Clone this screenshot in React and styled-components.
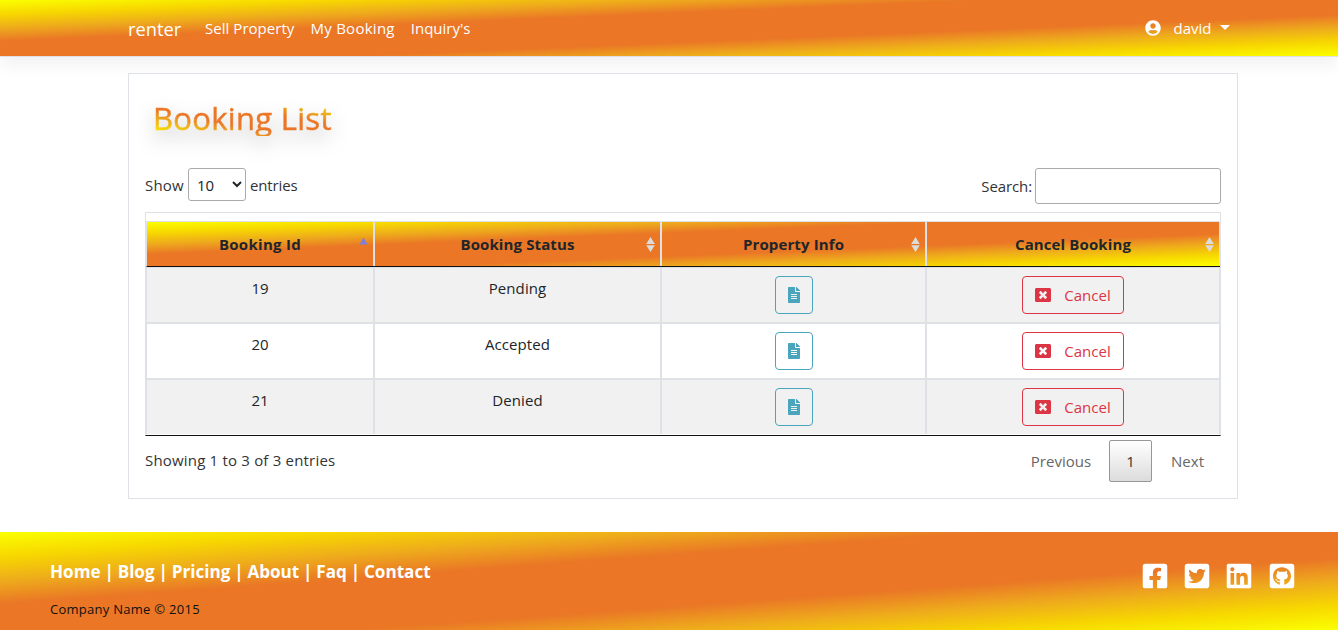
import React from 'react';
import styled, { createGlobalStyle, css } from 'styled-components';
import {
  FaUserCircle, FaFacebookSquare, FaTwitterSquare, FaLinkedin, FaGithubSquare, FaFileAlt, FaWindowClose,
} from 'react-icons/fa';

const stops = '#fbff00 0%, #f7d800 12.5%, #eeab1c 25%, #ea7626 37%, #ea7626 63%, #eeab1c 75%, #f7d800 87.5%, #fbff00 100%';
const sunset = `linear-gradient(to bottom right, ${stops})`;

const Global = createGlobalStyle`
  *, *::before, *::after { box-sizing: border-box; }
  html, body { margin: 0; overflow: hidden; }
  body {
    background: #fff;
    color: #212529;
    font-family: "Open Sans", "Noto Sans", sans-serif;
    font-size: 15px;
    line-height: 24px;
    font-weight: 400;
  }
`;

const Page = styled.div`
  height: 630px;
  display: flex;
  flex-direction: column;
`;

const Text = styled.span`
  display: inline-block;
  white-space: nowrap;
  letter-spacing: ${(p) => p.$ls || 0}px;
`;

const Navbar = styled.nav`
  height: 57px;
  flex: none;
  padding: 0 108px 0 128px;
  display: flex;
  align-items: center;
  background: ${sunset} padding-box;
  border-bottom: 1px solid #dee2e6;
  box-shadow: 0 8px 16px rgba(0, 0, 0, 0.06);
  color: #fff;
`;

const Brand = styled.a`
  font-size: 18.3px;
  width: 77px;
  padding-top: 2px;
`;

const NavLinks = styled.div`
  display: flex;
  gap: 16px;
  flex: 1;
`;

const UserMenu = styled.div`
  display: flex;
  align-items: center;
  svg { width: 16px; height: 16px; margin-right: 13px; }
`;

const Caret = styled.i`
  border-top: 5px solid #fff;
  border-left: 5px solid transparent;
  border-right: 5px solid transparent;
  margin: -2px 0 0 8.5px;
`;

const Card = styled.main`
  width: 1110px;
  height: 426px;
  flex: none;
  margin: 16px 0 33px 128px;
  border: 1px solid #dee2e6;
  padding: 24px 16px 0;
  display: flex;
  flex-direction: column;
`;

const Title = styled.h1`
  align-self: flex-start;
  margin: 0;
  padding: 0 8px;
  height: 38px;
  font-size: 31px;
  line-height: 40px;
  font-weight: 400;
  letter-spacing: 0.3px;
  white-space: nowrap;
  color: transparent;
  -webkit-text-stroke: 0.5px transparent;
  background: linear-gradient(to top right, ${stops});
  background-clip: text;
  -webkit-background-clip: text;
  filter: drop-shadow(0 8px 10px rgba(0, 0, 0, 0.25));
`;

const Controls = styled.div`
  display: flex;
  justify-content: space-between;
  height: 36px;
  margin-top: 32px;
  color: #333;
`;

const Control = styled.label`
  display: flex;
  align-items: center;
  height: ${(p) => p.$h}px;
`;

const Select = styled.select`
  width: 58px;
  height: 33px;
  margin: 0 4px 0 4px;
  padding: 4px;
  border: 1px solid #aaa;
  border-radius: 3px;
  background: #fff;
  font: inherit;
  color: #212529;
`;

const Search = styled.input`
  width: 186px;
  height: 36px;
  margin-left: 3px;
  border: 1px solid #aaa;
  border-radius: 3px;
  background: transparent;
`;

const TableFrame = styled.div`
  margin-top: 8px;
  height: 224px;
  flex: none;
  padding-top: 8px;
  border: 1px solid #dee2e6;
  border-bottom: 1px solid #111;
`;

const columns = css`
  display: grid;
  grid-template-columns: 228px 287px 265px 293px;
  border-left: 1px solid #dee2e6;
`;

const HeadRow = styled.div`
  ${columns}
  height: 46px;
  background: ${sunset};
  border-top: 1px solid #dee2e6;
  border-bottom: 1px solid #111;
`;

const HeadCell = styled.div`
  position: relative;
  display: flex;
  align-items: center;
  justify-content: center;
  font-weight: 700;
  border-right: ${(p) => (p.$last ? 1 : 2)}px solid #dee2e6;
`;

const Sorter = styled.svg`
  position: absolute;
  right: 5px;
  top: 14px;
  width: 9px;
  height: 17px;
`;

const Row = styled.div`
  ${columns}
  height: ${(p) => p.$h}px;
  background: ${(p) => (p.$odd ? '#f1f1f1' : '#fff')};
  border-top: ${(p) => p.$top}px solid #dee2e6;
`;

const Cell = styled.div`
  display: flex;
  justify-content: center;
  align-items: flex-start;
  padding-top: 8px;
  border-right: ${(p) => (p.$last ? 1 : 2)}px solid #dee2e6;
`;

const Outline = styled.button`
  width: ${(p) => p.$w}px;
  height: 38px;
  display: flex;
  align-items: center;
  justify-content: center;
  padding: 0;
  border: 1px solid ${(p) => p.$tone};
  border-radius: 4px;
  background: transparent;
  color: ${(p) => p.$tone};
  font: inherit;
  svg { width: 16px; height: 16px; }
  svg + span { margin-left: 13px; }
`;

const Footline = styled.div`
  display: flex;
  justify-content: space-between;
  color: #333;
  padding-top: 4px;
`;

const Info = styled.div`
  padding-top: 8px;
`;

const Pager = styled.div`
  display: flex;
  align-items: center;
  height: 42px;
  color: #666;
  padding-right: 17px;
`;

const PageButton = styled.button`
  width: 43px;
  height: 42px;
  margin: 0 19px 0 18px;
  border: 1px solid #979797;
  border-radius: 2px;
  background: linear-gradient(#fff, #dcdcdc);
  color: #333;
  font: inherit;
`;

const Footer = styled.footer`
  height: 98px;
  flex: none;
  padding: 28px 42.5px 0 50px;
  display: flex;
  justify-content: space-between;
  background: ${sunset};
`;

const FooterLinks = styled.div`
  color: #fff;
  font-size: 17.1px;
  font-weight: 700;
  word-spacing: -0.6px;
`;

const Copyright = styled.div`
  margin-top: 13px;
  font-size: 13px;
  color: #111;
`;

const Social = styled.div`
  display: flex;
  gap: 14.3px;
  padding-top: 2px;
  color: #fff;
  svg { width: 28px; height: 28px; }
`;

const headings = ['Booking Id', 'Booking Status', 'Property Info', 'Cancel Booking'];
const bookings = [
  { id: 19, status: 'Pending' },
  { id: 20, status: 'Accepted' },
  { id: 21, status: 'Denied' },
];

function SortIcon({ asc }) {
  return (
    <Sorter viewBox="0 0 9 17">
      {asc
        ? <path d="M4.5 1.5 8.5 8.5H.5z" fill="#7b7fe0" />
        : <path d="M4.5 1 8.8 8H.2zM.2 9.2h8.6L4.5 16z" fill="#dcdcdc" />}
    </Sorter>
  );
}

export default function App() {
  return (
    <Page>
      <Global />
      <Navbar>
        <Brand><Text>renter</Text></Brand>
        <NavLinks>
          <Text $ls={0.04}>Sell Property</Text>
          <Text $ls={0.27}>My Booking</Text>
          <Text>Inquiry's</Text>
        </NavLinks>
        <UserMenu><FaUserCircle /><Text>david</Text><Caret /></UserMenu>
      </Navbar>
      <Card>
        <Title>Booking List</Title>
        <Controls>
          <Control $h={33}>
            <Text $ls={0.2}>Show</Text>
            <Select defaultValue="10"><option>10</option><option>25</option></Select>
            <Text $ls={-0.1}>entries</Text>
          </Control>
          <Control $h={36}><Text $ls={-0.1}>Search:</Text><Search /></Control>
        </Controls>
        <TableFrame>
          <HeadRow>
            {headings.map((h, i) => (
              <HeadCell key={h} $last={i === 3}><Text $ls={i === 0 ? 0.3 : 0.12}>{h}</Text><SortIcon asc={i === 0} /></HeadCell>
            ))}
          </HeadRow>
          {bookings.map((b, i) => (
            <Row key={b.id} $odd={i % 2 === 0} $h={i === 0 ? 55 : 56} $top={i === 0 ? 1 : 2}>
              <Cell><Text>{b.id}</Text></Cell>
              <Cell><Text $ls={0.1}>{b.status}</Text></Cell>
              <Cell><Outline $w={38} $tone="#4ba6bd"><FaFileAlt /></Outline></Cell>
              <Cell $last><Outline $w={102} $tone="#dc3545"><FaWindowClose /><Text>Cancel</Text></Outline></Cell>
            </Row>
          ))}
        </TableFrame>
        <Footline>
          <Info><Text $ls={0.19}>Showing 1 to 3 of 3 entries</Text></Info>
          <Pager><Text>Previous</Text><PageButton>1</PageButton><Text>Next</Text></Pager>
        </Footline>
      </Card>
      <Footer>
        <div>
          <FooterLinks><Text>Home | Blog | Pricing | About | Faq | Contact</Text></FooterLinks>
          <Copyright><Text $ls={0.27}>Company Name © 2015</Text></Copyright>
        </div>
        <Social><FaFacebookSquare /><FaTwitterSquare /><FaLinkedin /><FaGithubSquare /></Social>
      </Footer>
    </Page>
  );
}
